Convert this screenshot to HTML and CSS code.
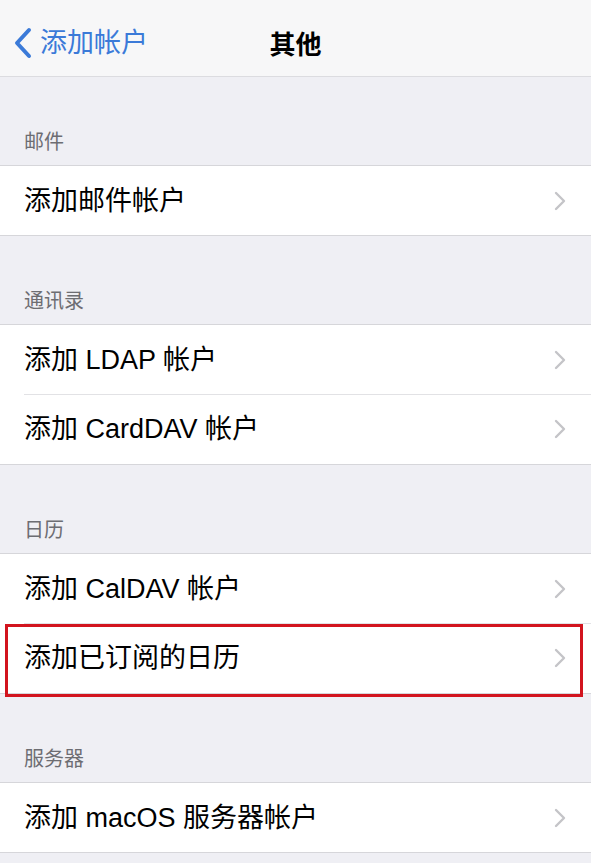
FILE: index.html
```html
<!DOCTYPE html>
<html lang="zh-CN">
<head>
<meta charset="utf-8">
<title>其他</title>
<link rel="stylesheet" href="styles.css">
</head>
<body>
<div class="screen">
  <header class="nav">
    <div class="back">
      <svg class="back-icon" width="20" height="32" viewBox="0 0 20 32"><path d="M16 3 L4 16 L16 29" fill="none" stroke="#3b7ad8" stroke-width="4" stroke-linecap="round" stroke-linejoin="round"/></svg>
      <span class="back-text">添加帐户</span>
    </div>
    <div class="title">其他</div>
  </header>

  <div class="section-header">邮件</div>
  <div class="group">
    <div class="row"><span class="label">添加邮件帐户</span><svg class="chev" width="13" height="20" viewBox="0 0 13 20"><path d="M2 2 L10 10 L2 18" fill="none" stroke="#c4c4c8" stroke-width="2.4" stroke-linecap="round" stroke-linejoin="round"/></svg></div>
  </div>

  <div class="section-header">通讯录</div>
  <div class="group">
    <div class="row"><span class="label">添加 LDAP 帐户</span><svg class="chev" width="13" height="20" viewBox="0 0 13 20"><path d="M2 2 L10 10 L2 18" fill="none" stroke="#c4c4c8" stroke-width="2.4" stroke-linecap="round" stroke-linejoin="round"/></svg></div>
    <div class="row"><span class="label">添加 CardDAV 帐户</span><svg class="chev" width="13" height="20" viewBox="0 0 13 20"><path d="M2 2 L10 10 L2 18" fill="none" stroke="#c4c4c8" stroke-width="2.4" stroke-linecap="round" stroke-linejoin="round"/></svg></div>
  </div>

  <div class="section-header">日历</div>
  <div class="group">
    <div class="row"><span class="label">添加 CalDAV 帐户</span><svg class="chev" width="13" height="20" viewBox="0 0 13 20"><path d="M2 2 L10 10 L2 18" fill="none" stroke="#c4c4c8" stroke-width="2.4" stroke-linecap="round" stroke-linejoin="round"/></svg></div>
    <div class="row highlighted"><span class="label">添加已订阅的日历</span><svg class="chev" width="13" height="20" viewBox="0 0 13 20"><path d="M2 2 L10 10 L2 18" fill="none" stroke="#c4c4c8" stroke-width="2.4" stroke-linecap="round" stroke-linejoin="round"/></svg><div class="mark"></div></div>
  </div>

  <div class="section-header">服务器</div>
  <div class="group">
    <div class="row"><span class="label">添加 macOS 服务器帐户</span><svg class="chev" width="13" height="20" viewBox="0 0 13 20"><path d="M2 2 L10 10 L2 18" fill="none" stroke="#c4c4c8" stroke-width="2.4" stroke-linecap="round" stroke-linejoin="round"/></svg></div>
  </div>
</div>
</body>
</html>
```

FILE: styles.css
```css
* { box-sizing: border-box; }
html, body {
  margin: 0;
  padding: 0;
  background: #efeff4;
}
body {
  font-family: "Liberation Sans", "Noto Sans CJK SC", sans-serif;
  color: #000;
}
.screen {
  width: 591px;
  min-height: 863px;
  background: #efeff4;
  overflow: hidden;
}
.nav {
  height: 77px;
  padding-top: 9px;
  background: #f7f7f8;
  border-bottom: 1px solid #dcdce0;
  display: flex;
  align-items: center;
  position: relative;
}
.back {
  display: flex;
  align-items: center;
  padding-left: 13px;
  gap: 7px;
}
.back-icon { display: block; }
.back-text {
  font-size: 27px;
  color: #3b7ad8;
  line-height: 32px;
}
.title {
  position: absolute;
  left: 0;
  right: 0;
  top: 9px;
  bottom: 0;
  display: flex;
  align-items: center;
  justify-content: center;
  font-size: 26px;
  font-weight: bold;
  pointer-events: none;
}
.section-header {
  height: 88px;
  display: flex;
  align-items: flex-end;
  padding: 0 0 11px 24px;
  font-size: 20px;
  line-height: 24px;
  color: #6d6d72;
}
.group {
  background: #fff;
  border-top: 1px solid #d6d6da;
  border-bottom: 1px solid #d6d6da;
}
.row {
  height: 70px;
  display: flex;
  align-items: center;
  justify-content: space-between;
  padding: 0 24px 0 24px;
  position: relative;
}
.row + .row::before {
  content: "";
  position: absolute;
  left: 24px;
  right: 0;
  top: 0;
  height: 1px;
  background: #e2e2e5;
}
.group .row:first-child { height: 69px; }
.label {
  font-size: 27px;
  line-height: 32px;
}
.chev { display: block; }
.mark {
  position: absolute;
  left: 5px;
  right: 8px;
  top: 1px;
  bottom: -4px;
  border: 3px solid #d2141e;
}
```
